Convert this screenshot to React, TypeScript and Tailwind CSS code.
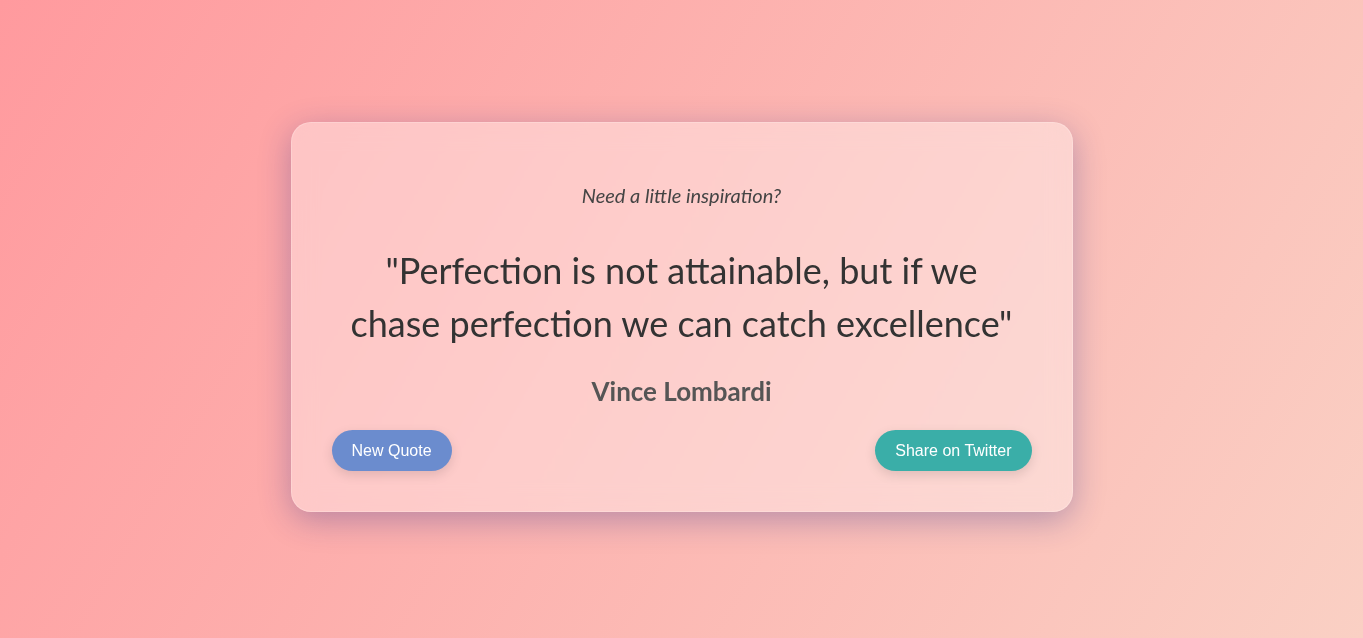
import React, { useState } from 'react';

const quotes = [
    {
        text: 'Perfection is not attainable, but if we chase perfection we can catch excellence',
        author: 'Vince Lombardi',
    },
];

export default function App() {
    const [index, setIndex] = useState(0);
    const quote = quotes[index];

    return (
        <div className="min-h-screen w-full flex items-center justify-center pb-[4px] bg-[linear-gradient(120deg,#ff9a9e_0%,#fad0c4_100%)] font-['Lato',sans-serif]">
            <div className="w-[782px] rounded-[20px] border border-white/20 bg-white/35 backdrop-blur-md shadow-[0_8px_32px_rgba(31,38,135,0.3)] pt-[57px] pb-[40px] px-10 flex flex-col items-center">
                <p className="text-[20px] leading-[30px] italic text-[#444]">Need a little inspiration?</p>
                <p className="mt-[34px] text-[36px] leading-[53px] text-[#333] text-center px-4">
                    "{quote.text}"
                </p>
                <p className="mt-[22px] text-[26px] leading-[38px] font-bold text-[#555]">{quote.author}</p>
                <div className="mt-[20px] w-full flex justify-between items-center font-['Liberation_Sans',sans-serif]">
                    <button
                        className="h-[41px] px-5 rounded-full bg-[#6b8cce] text-white text-[16px] shadow-[0_4px_12px_rgba(0,0,0,0.12)]"
                        onClick={() => setIndex((index + 1) % quotes.length)}
                    >
                        New Quote
                    </button>
                    <button className="h-[41px] px-5 rounded-full bg-[#3aaea8] text-white text-[16px] shadow-[0_4px_12px_rgba(0,0,0,0.12)]">
                        Share on Twitter
                    </button>
                </div>
            </div>
        </div>
    );
}
